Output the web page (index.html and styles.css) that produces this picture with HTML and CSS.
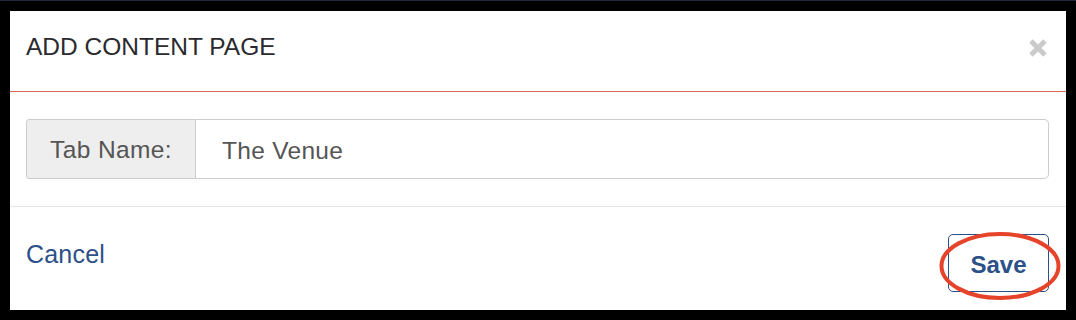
FILE: index.html
```html
<!DOCTYPE html>
<html lang="en">
<head>
  <meta charset="UTF-8">
  <title>Add Content Page</title>
  <link rel="stylesheet" href="styles.css">
</head>
<body>
  <div class="modal">
    <div class="modal-header">
      <h4 class="modal-title">ADD CONTENT PAGE</h4>
      <button class="close" aria-label="Close">
        <svg width="20" height="20" viewBox="0 0 20 20">
          <path d="M3 3 L17 17 M17 3 L3 17" stroke="#cbcbcb" stroke-width="5" stroke-linecap="butt"/>
        </svg>
      </button>
    </div>

    <div class="modal-body">
      <div class="input-group">
        <span class="addon">Tab Name:</span>
        <input type="text" class="field" value="The Venue">
      </div>
    </div>

    <div class="modal-footer">
      <a href="#" class="cancel">Cancel</a>
      <button class="save">Save</button>
    </div>

    <svg class="mark" width="126" height="74" viewBox="0 0 126 74">
      <ellipse cx="63" cy="37" rx="58.5" ry="32" fill="none" stroke="#e5432a" stroke-width="4"/>
    </svg>
  </div>
</body>
</html>
```

FILE: styles.css
```css
body {
  margin: 0;
  background-color: #000;
  border-top: 1px solid #1d2a3d;
  font-family: "Liberation Sans", Arial, sans-serif;
}
.modal {
  position: relative;
  margin: 10px 10px 0 10px;
  width: 1056px;
  height: 299px;
  background-color: #fff;
  display: flex;
  flex-direction: column;
}
.modal-header {
  height: 81px;
  box-sizing: border-box;
  border-bottom: 1px solid #d9645a;
  display: flex;
  align-items: center;
  justify-content: space-between;
  padding: 0 18px 8px 16px;
}
.modal-title {
  margin: 0;
  font-size: 24.5px;
  font-weight: normal;
  color: #2a2a2e;
}
.close {
  border: none;
  background: none;
  padding: 0;
  width: 20px;
  height: 20px;
  margin-top: 2px;
}
.close svg {
  display: block;
}
.modal-body {
  padding: 27px 17px 27px 16px;
  border-bottom: 1px solid #e5e5e5;
}
.input-group {
  display: flex;
  height: 60px;
}
.addon {
  display: flex;
  align-items: center;
  box-sizing: border-box;
  width: 170px;
  padding: 2px 0 0 23px;
  background-color: #eee;
  border: 1px solid #ccc;
  border-radius: 3px 0 0 3px;
  font-size: 24.5px;
  letter-spacing: 0.4px;
  color: #555;
}
.field {
  flex: 1;
  border: 1px solid #ccc;
  border-left: none;
  border-radius: 0 5px 5px 0;
  padding: 3px 0 0 26px;
  font-family: inherit;
  font-size: 24.5px;
  letter-spacing: 0.3px;
  color: #555;
  outline: none;
}
.modal-footer {
  flex: 1;
  display: flex;
  justify-content: space-between;
  align-items: flex-start;
  padding: 27px 17px 0 16px;
}
.cancel {
  margin-top: 5px;
  font-size: 25px;
  line-height: 30px;
  letter-spacing: 0.2px;
  color: #2c5088;
  text-decoration: none;
}
.save {
  width: 101px;
  height: 58px;
  border: 1px solid #2c5088;
  border-radius: 5px;
  background-color: #fff;
  font-family: inherit;
  font-size: 24px;
  font-weight: bold;
  color: #2c5088;
  padding: 4px 0 0 0;
}
.mark {
  position: absolute;
  left: 927px;
  top: 218px;
}
```
